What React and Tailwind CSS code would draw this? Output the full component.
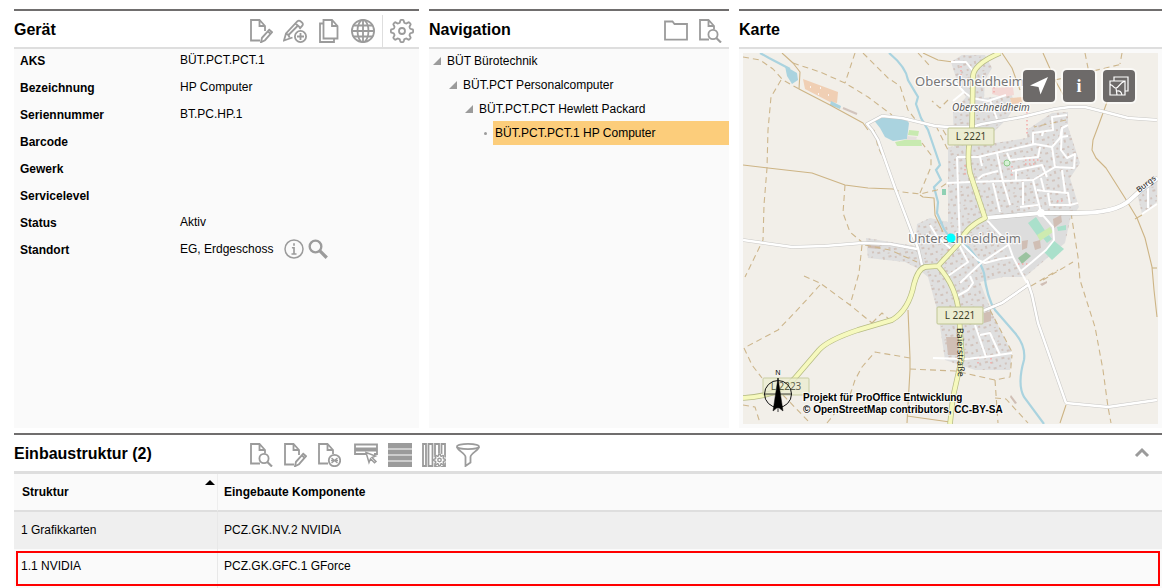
// src/App.jsx
import { ChevronUp } from 'lucide-react';

const device = [
  { label:'AKS',          value:'BÜT.PCT.PCT.1' },
  { label:'Bezeichnung',  value:'HP Computer' },
  { label:'Seriennummer', value:'BT.PC.HP.1' },
  { label:'Barcode',      value:'' },
  { label:'Gewerk',       value:'' },
  { label:'Servicelevel', value:'' },
  { label:'Status',       value:'Aktiv' },
  { label:'Standort',     value:'EG, Erdgeschoss', location:true },
];

const tree = [
  { text:'BÜT Bürotechnik',             indent:'pl-1' },
  { text:'BÜT.PCT Personalcomputer',    indent:'pl-5' },
  { text:'BÜT.PCT.PCT Hewlett Packard', indent:'pl-9' },
  { text:'BÜT.PCT.PCT.1 HP Computer',   indent:'pl-13', selected:true },
];

const components = [
  { structure:'1 Grafikkarten', part:'PCZ.GK.NV.2 NVIDIA' },
  { structure:'1.1 NVIDIA',     part:'PCZ.GK.GFC.1 GForce', marked:true },
];

/* ---------- Icons ---------- */

function gearPath(cx, cy, r, depth) {
  const pts = [];
  for (let i = 0; i < 96; i++) {
    const a = (i / 96) * Math.PI * 2;
    const wave = Math.tanh(2.2 * Math.cos(a * 8));
    const rr = r + depth * wave;
    pts.push(`${(cx + rr * Math.cos(a)).toFixed(2)} ${(cy + rr * Math.sin(a)).toFixed(2)}`);
  }
  return `M${pts.join('L')}Z`;
}

function Icon({ children, className = 'size-6' }) {
  return (
    <svg viewBox="0 0 24 24" className={`${className} block text-[#9b9b9b]`} fill="none" stroke="currentColor" strokeWidth="1.8" aria-hidden="true">
      {children}
    </svg>
  );
}

const DocEdit = () => (
  <Icon>
    <path d="M11 21.5H2V1h8.500l5.500 6v5M10.500 1v6H16"/>
    <path d="M20.200 10.800l2.800 2.400-7 8-4 2 1-4.400z"/><path d="M19 12.500l2.600 2.300"/>
  </Icon>
);
const PencilPlus = () => (
  <Icon>
    <path d="M9.500 18.500L1 21.500l2-7L14.500 2.200q1.500-1.200 3.300.3l1.300 1.200q1.400 1.400.2 3L16.500 10M3 14.500q2.500.5 3.500 4M12.500 4.500l4.500 4M5.500 16L15 6.500"/>
    <circle cx="17.500" cy="17.500" r="5.600"/><path d="M17.500 14v7M14 17.500h7"/>
  </Icon>
);
const Copies = () => (
  <Icon>
    <path d="M6.500 1H15l5.500 6v12.500h-14zM15 1v6h5.500"/><path d="M6.500 4.500H3V23h14v-3.500"/>
  </Icon>
);
const GlobeIcon = () => (
  <Icon>
    <circle cx="12" cy="12" r="11.100"/><ellipse cx="12" cy="12" rx="5.500" ry="11.100"/>
    <path d="M12 1v22M1 12h22M2.500 6.500h19M2.500 17.500h19"/>
  </Icon>
);
const Gear = () => (
  <Icon><path d={gearPath(12, 12, 9.8, 1.4)}/><circle cx="12" cy="12" r="3"/></Icon>
);
const Folder = () => (
  <Icon><path d="M1 20.700V2.500h7.500l2 2.500H23v15.700z"/></Icon>
);
const DocSearch = () => (
  <Icon>
    <path d="M11 20.500H2V1h8.500l5.500 6v3.500M10.500 1v6H16"/><circle cx="15" cy="15.500" r="4.600"/><path d="M18.300 19l4.700 4.500" strokeWidth="2.200"/>
  </Icon>
);
const DocRemove = () => (
  <Icon>
    <path d="M11 20.500H2V1h8.500l5.500 6v4M10.500 1v6H16"/><circle cx="17.500" cy="17.500" r="5.700"/>
    <path d="M14.500 15l6 5M20.500 15l-6 5M14 17.500h7" strokeWidth="1.400"/>
  </Icon>
);
const RowSelect = () => (
  <Icon>
    <path d="M1 1.500h22v4H1zM12 11H1V7.500h22V11h-3"/><path d="M12 9.500l9.500 3.500-3.500 1.500 4 4-1.500 1.300-4-4-1.500 3.700z" fill="#fff" strokeWidth="1.500"/>
  </Icon>
);
const Rows = () => (
  <Icon><path d="M0 0h24v5.500H0zM0 6.500h24v5H0zM0 12.500h24v5H0zM0 18.500h24V24H0z" fill="currentColor" stroke="none"/></Icon>
);
const Columns = () => (
  <Icon>
    <path d="M1 1h3v22H1zM6.500 1h4v22h-4zM13 1h4v22h-4zM19.500 1H23v22h-3.500z"/>
    <circle cx="17.500" cy="17" r="6.500" fill="#fff" stroke="none"/>
    <path d={gearPath(17.5, 17, 5, 0.8)} strokeWidth="1.500"/><circle cx="17.500" cy="17" r="1.700" strokeWidth="1.400"/>
  </Icon>
);
const Funnel = () => (
  <Icon>
    <ellipse cx="12" cy="3.500" rx="11" ry="2.600"/><path d="M1 4c0 3 8.500 6.500 8.500 10v9l5-3.500V14C14.500 10.500 23 7 23 4"/>
  </Icon>
);

function IconButton({ label, children }) {
  return <button type="button" title={label} aria-label={label} className="cursor-pointer">{children}</button>;
}

/* ---------- Map ---------- */

const tracks = [
  '782,53 793,63 800,72 799,89 830,105 863,123 868,130',
  '923,53 938,60 953,62', '1002,53 1012,68 1020,90', '1043,53 1055,80 1065,98', '1107,102 1099,124 1093,140 1092,150 1096,158 1106,168 1125,198 1137,218 1145,238 1152,267 1154,290 1157,317',
  '743,165 768,168 812,173 845,185 868,188 893,189', '920,195 923,197 934,198 935,215 943,232',
  '908,310 910,358 910,370 907,423', '1066,405 1060,423', '907,416 950,422', '1135,219 1142,215', '1152,268 1157,268',
];

const paths = [
  '793,63 820,72 845,83 868,97 892,115', '855,53 845,83', '743,57 760,60 773,69 783,80 799,89', '781,80 771,97 768,130 767,168 764,205 763,240 745,277',
  '863,53 888,78 900,86 908,110 918,123', '948,100 940,108 932,101', '1055,80 1085,73 1122,64', '1085,53 1089,73', '1122,53 1120,64', '893,189 902,192 920,194 937,190 947,183',
  '920,193 931,167 931,155 922,143', '874,130 878,147 888,168', '845,185 843,213 850,232 863,243', '862,245 859,273 850,305', '804,276 820,283 850,305 872,323',
  '820,285 800,307 778,330 744,348', '744,348 752,365 762,378', '872,323 882,313 890,320', '910,358 875,352 862,367 855,380 850,395', '910,369 955,371 995,380 1010,377 1012,355',
  '995,380 998,423', '995,398 1006,399 1028,423', '1071,213 1078,257 1080,280 1095,327 1103,370 1108,407 1111,423', '1043,280 1073,262', '1031,286 1058,270',
  '743,405 755,407 760,423', '783,395 810,423', '827,423 835,413', '865,245 890,250 917,262', '990,310 1012,352', '918,53 930,66', '936,126 948,150', '1066,120 1034,127', '943,130 949,140',
];

const streets = [
  '957,157 960,247 968,262 945,278', '957,157 978,157 995,153 1035,144 1052,147 1060,138 1062,128 1068,125', '1052,147 1055,167 1033,180 970,182 947,183',
  '1033,145 1033,133 1053,130 1052,117 1067,115', '997,153 1003,182 1010,205', '993,183 1000,212', '1023,182 1023,205', '1020,207 1038,205', '1033,180 1037,197 1041,212',
  '1062,128 1061,150 1067,158 1075,154 1074,168 1055,167', '1037,190 1045,191 1068,193 1070,205 1078,203', '1048,193 1050,205 1070,205', '1062,170 1065,192', '1007,153 1010,160 1038,157 1040,147',
  '978,179 983,175 998,171', '1012,171 1042,165 1047,177', '1016,171 1016,180', '1042,136 1043,132', '980,157 982,166', '1061,137 1068,136', '1041,178 1044,190',
  '951,62 966,62 974,72', '972,98 964,92 955,82', '964,92 953,101', '972,98 988,101 1006,95', '990,100 997,119', '985,218 1008,243 1013,257 1027,283', '1041,213 1053,227 1054,240 1046,250 1032,262 1021,271',
  '960,242 978,260 985,263 1000,259 1013,257', '1008,245 981,263 960,283', '1028,285 1002,303 985,310 950,322', '957,296 968,290 973,283 970,276', '933,358 965,359 985,357 1012,353', '975,325 986,357', '980,335 990,333 1000,355', '930,225 938,238 955,252',
  '1148,186 1148,208', '1142,214 1157,204',
];

const roads = [
  '1157,120 1128,118 1105,112 1085,107 1070,107 1055,109 1022,117 982,124 972,127 948,127 935,126 902,118 882,116 867,124 872,130 878,140 895,188 912,233 918,248 922,265',
  '743,240 792,247 825,246 862,243 890,244 917,249', '1027,280 1032,295 1038,323 1052,363 1066,403', '1066,403 1108,407 1157,400', '1028,285 1002,303 985,310',
];

const settlements = [
  '951,62 962,55 985,55 992,68 985,80 984,98 1012,95 1014,108 1006,120 985,140 968,152 954,148 953,112 966,97 958,84',
  '948,147 995,143 1027,138 1027,130 1052,113 1068,112 1068,127 1080,163 1070,178 1079,207 1070,220 1065,243 1025,277 1003,277 980,282 992,313 1012,353 1010,370 975,370 945,360 938,313 928,277 917,268 905,262 868,258 866,238 915,246 917,224 930,218 948,222',
  '1137,193 1157,178 1157,202 1142,214',
];

function Lines({ items, ...rest }) {
  return <g fill="none" strokeLinejoin="round" {...rest}>{items.map(p => <polyline key={p} points={p}/>)}</g>;
}

function RoadSign({ x, y, text, opacity = 1 }) {
  return (
    <g opacity={opacity}>
      <rect x={x} y={y} width="46" height="17" rx="1" fill="#ecedd2" stroke="#bfc592"/>
      <text x={x + 23} y={y + 12} textAnchor="middle" fontSize="10" fill="#3c4028">{text}</text>
    </g>
  );
}

const stateRoad = 'M1000 53Q974 64 973 76L972 127Q966 155 970 173L985 218Q966 227 960 242L938 266L925 267Q918 269 914 284Q909 310 892 320L858 330Q828 340 819 350L795 378Q780 396 743 398M938 266Q957 287 959 315L962 357L953 397L950 424';
const mainRoad = 'M985 218L1041 213H1078Q1116 213 1130 200L1141 190L1158 178';

function MapCanvas() {
  return (
    <svg viewBox="743 53 415 371" className="block w-full font-['Noto_Sans',sans-serif]" role="img" aria-label="Karte Unterschneidheim">
      <defs>
        <pattern id="houses" width="17" height="14" patternUnits="userSpaceOnUse" patternTransform="rotate(-14)">
          <path d="M1 1h3v2h-3zM7 3h2v2h-2zM12 1h2v3h-2zM3 7h2v2h-2zM8 9h3v2h-3zM14 8h2v2h-2zM1 12h2v1h-2z" fill="#d2c4bd"/>
        </pattern>
      </defs>
      <rect x="743" y="53" width="415" height="371" fill="#f2efe9"/>
      {settlements.map(p => <polygon key={p} points={p} fill="#dfdfdf"/>)}
      {settlements.map(p => <polygon key={p} points={p} fill="url(#houses)"/>)}
      <polygon points="988,220 1041,215 1070,216 1064,243 1026,275 1010,258" fill="#dddddd"/>

      {/* Fields, ponds and sports grounds */}
      <polygon points="803,79 838,92 837,103 830,102 805,89" fill="#f0cfb4"/>
      <path d="M810 87h1M820 88h1M818 94h1M828 95h1" stroke="#fff" strokeWidth="1.500"/>
      <polygon points="992,88 1013,87 1014,95 1003,97 992,94" fill="#f3d8d5"/>
      <polygon points="1010,98 1024,97 1022,103 1012,104" fill="#f0cfb4"/>
      <polygon points="785,66 797,73 798,80 792,84 787,76" fill="#aad3df"/>
      <polygon points="831,101 841,106 840,109 830,105" fill="#aad3df"/>
      <path d="M843 108l14 6" stroke="#d2c4bd" strokeWidth="2"/>
      <path d="M873 119L885 116L905 118L909 123L907 139L893 141L885 137L880 128Z" fill="#aad3df"/>
      <polygon points="909,130 919,131 918,136 908,135" fill="#c8eab0"/>
      <polygon points="895,142 909,139 921,140 922,146 897,146" fill="#c8eab0"/>
      <polygon points="907,136 917,137 916,140 907,140" fill="#e5dfdc"/>
      <rect x="942" y="189" width="4" height="6" fill="#8fd0b4"/>
      <circle cx="1007" cy="163" r="3" fill="#d5f1d4" stroke="#8dcb8c"/>
      <g fill="#aae0cb">
        <polygon points="1028,223 1036,217 1046,232 1039,238"/><polygon points="1057,227 1066,225 1066,230 1058,231"/><polygon points="1053,240 1064,249 1052,260 1044,252"/><polygon points="1043,238 1049,235 1052,239 1047,243"/>
      </g>
      <polygon points="1037,235 1050,227 1053,232 1040,241" fill="#cdebb0"/>
      <polygon points="1018,258 1026,252 1031,256 1022,264" fill="#9bc3a0"/>
      <g fill="#d0beb4">
        <polygon points="1053,219 1061,215 1062,222 1054,228"/><polygon points="1033,242 1040,240 1041,248 1035,250"/><polygon points="1022,241 1028,240 1027,248 1022,250"/><polygon points="868,245 880,246 880,249 868,248"/>
        <polygon points="984,313 991,311 991,321 984,323"/><polygon points="946,337 958,337 958,355 948,355"/><polygon points="1011,395 1017,403 1015,404 1010,397"/><polygon points="1040,284 1047,281 1047,283 1042,286"/>
      </g>
      <path d="M961 66v9M994 87v8M1027 112v22M1025 160h14M1025 164h10M1012 166v10M965 165v12M1057 201h6M948 250h6M978 358v6M991 358v6M1018 264h10" fill="none" stroke="#f4a9a6" strokeWidth="1.500" strokeDasharray="1.500 2.500"/>

      <path d="M760 53L769 58L790 69M889 53Q906 67 908 80L918 97L916 104L921 118L928 130L940 165L936 170L941 180L934 187L938 202L937 213L944 229L950 238L968 247Q981 262 984 273Q987 298 995 310L1015 333Q1026 346 1024 360Q1017 384 1024 397L1044 424" fill="none" stroke="#aad3df" strokeWidth="2.200"/>
      <Lines items={tracks} stroke="#cdb485" strokeWidth="1.100"/>
      <Lines items={paths} stroke="#cdb68c" strokeWidth="1.100" strokeDasharray="6 4"/>
      <Lines items={roads} stroke="#c9c8c6" strokeWidth="3.600"/>
      <Lines items={streets} stroke="#fff" strokeWidth="2"/>
      <Lines items={roads} stroke="#fff" strokeWidth="2.400"/>
      <path d={mainRoad} fill="none" stroke="#c4c3c1" strokeWidth="5"/>
      <path d={mainRoad} fill="none" stroke="#fff" strokeWidth="3.800"/>
      <circle cx="1041" cy="213" r="4" fill="#fff"/>
      <path d={stateRoad} fill="none" stroke="#b6bb84" strokeWidth="5.500" strokeLinejoin="round"/>
      <path d={stateRoad} fill="none" stroke="#f6f9be" strokeWidth="4" strokeLinejoin="round"/>

      <RoadSign x={948} y={128} text="L 2221"/>
      <RoadSign x={937} y={307} text="L 2221"/>
      <RoadSign x={763} y={378} text="L 2223" opacity={0.8}/>

      {/* Place and street names with a light halo */}
      <g fill="#777" stroke="#fff" strokeWidth="2.500" strokeOpacity="0.800" paintOrder="stroke" strokeLinejoin="round">
        <text x="915" y="86" fontSize="13">Oberschneidheim</text>
        <text x="908" y="243" fontSize="13">Unterschneidheim</text>
        <text x="952" y="111" fontSize="10" fontStyle="italic" fill="#555">Oberschneidheim</text>
      </g>
      <text fontSize="8" fill="#222" transform="translate(1139 193) rotate(-38)">Burgs</text>
      <text fontSize="9" fill="#222" transform="translate(957 328) rotate(89)">Baierstraße</text>
      <circle cx="951" cy="238" r="4.500" fill="#00ffff"/>

      {/* North arrow */}
      <g stroke="#111" fill="none">
        <circle cx="778" cy="394" r="13.500"/><path d="M764 394h28M778 378v34" strokeWidth="0.800"/>
        <path d="M778 378l5 33-5-4-5 4z" fill="#000" strokeWidth="0.500"/>
      </g>
      <text x="778" y="375" textAnchor="middle" fontSize="7" fill="#000">N</text>
      <g className="font-['Liberation_Sans',Arial,sans-serif]" fontSize="10" fontWeight="700" fill="#000" stroke="#fff" strokeWidth="2" strokeOpacity="0.700" paintOrder="stroke">
        <text x="803" y="401">Projekt für ProOffice Entwicklung</text>
        <text x="803" y="413">© OpenStreetMap contributors, CC-BY-SA</text>
      </g>
    </svg>
  );
}

function MapButton({ label, children }) {
  return (
    <button type="button" aria-label={label} className="flex size-8 cursor-pointer items-center justify-center rounded bg-[#6d6a69] text-white shadow-[0_0_0_2px_rgba(255,255,255,0.6)]">
      {children}
    </button>
  );
}

/* ---------- Page ---------- */

function PanelHeader({ title, children }) {
  return (
    <header className="flex h-10 items-center justify-between border-t-2 border-b-2 border-t-[#706e6e] border-b-[#dedede] bg-white">
      <h2 className="pt-0.5 text-base font-bold">{title}</h2>
      {children}
    </header>
  );
}

export default function App() {
  return (
    <main className="bg-white pt-[9px] pr-1 pl-3.5 font-['Liberation_Sans',Arial,sans-serif] text-xs text-black">
      <div className="grid grid-cols-[405fr_300fr_423fr] gap-2.5">
        {/* Device */}
        <section className="bg-[#fafafa]">
          <PanelHeader title="Gerät">
            <div className="flex gap-2.5 pt-1 pr-[5px]">
              <IconButton label="Bearbeiten"><DocEdit/></IconButton>
              <IconButton label="Erweitert bearbeiten"><PencilPlus/></IconButton>
              <IconButton label="Kopieren"><Copies/></IconButton>
              <IconButton label="Web"><GlobeIcon/></IconButton>
              <div className="-my-1 -ml-[3px] flex items-center border-l border-[#dedede] pl-[7px]">
                <IconButton label="Einstellungen"><Gear/></IconButton>
              </div>
            </div>
          </PanelHeader>
          <dl className="pl-1.5">
            {device.map(d => (
              <div key={d.label} className="flex h-[27px]">
                <dt className="w-40 leading-6 font-bold">{d.label}</dt>
                <dd className="flex items-start leading-[22px]">
                  {d.value}
                  {d.location && (
                    <span className="flex gap-1 pt-px pl-[11px]">
                      <IconButton label="Standortinfo">
                        <Icon className="size-5"><circle cx="12" cy="12" r="10.800"/><path d="M12 5v3M9.500 10.500H12V18M9 18h6" strokeWidth="2"/></Icon>
                      </IconButton>
                      <IconButton label="Standort suchen">
                        <Icon className="size-5"><circle cx="9" cy="9" r="7" strokeWidth="2.800"/><path d="M14 14l8.500 8.500" strokeWidth="4"/></Icon>
                      </IconButton>
                    </span>
                  )}
                </dd>
              </div>
            ))}
          </dl>
        </section>

        {/* Navigation */}
        <section className="bg-[#fafafa]">
          <PanelHeader title="Navigation">
            <div className="flex gap-2.5 pt-1 pr-[7px]">
              <IconButton label="Ordner"><Folder/></IconButton>
              <IconButton label="Dokument suchen"><DocSearch/></IconButton>
            </div>
          </PanelHeader>
          <ul>
            {tree.map(t => (
              <li key={t.text} className={`flex h-6 items-center ${t.indent}`}>
                <span className="w-3">
                  {t.selected
                    ? <span className="ml-[3px] block size-[3px] rounded-full bg-[#9b9b9b]"/>
                    : <svg viewBox="0 0 8 8" className="size-2"><path d="M8 0v8H0z" fill="#9b9b9b"/></svg>}
                </span>
                <a href="#" className={`flex-1 pl-0.5 leading-6 ${t.selected ? 'bg-[#fccd7b]' : ''}`}>{t.text}</a>
              </li>
            ))}
          </ul>
        </section>

        {/* Map */}
        <section className="bg-[#fafafa]">
          <PanelHeader title="Karte"/>
          <div className="relative p-1">
            <MapCanvas/>
            <div className="absolute top-[21px] right-[27px] flex gap-2">
              <MapButton label="Position">
                <svg viewBox="0 0 20 20" className="size-5"><path d="M19 1L11.500 18.500L9.500 11L1 9.500z" fill="currentColor"/></svg>
              </MapButton>
              <MapButton label="Info"><span className="font-['Liberation_Serif',serif] text-lg font-bold">i</span></MapButton>
              <MapButton label="Ebenen">
                <svg viewBox="0 0 20 20" className="size-5" fill="none" stroke="currentColor" strokeWidth="1.200"><path d="M5 5V1h14v14h-3M1 5h15v14H1zM1 9c3-1 3 3 6 3s3-5 9-7M7 12l1 7M8 15q4-1 5 4"/></svg>
              </MapButton>
            </div>
          </div>
        </section>
      </div>

      {/* Installed components */}
      <section className="mt-[5px] bg-[#fafafa]">
        <header className="flex h-[41px] items-center border-t-2 border-b-[3px] border-t-[#706e6e] border-b-[#dedede] bg-white">
          <h2 className="w-[235px] pt-0.5 text-base font-bold">Einbaustruktur (2)</h2>
          <div className="flex gap-[13px] pt-1">
            <div className="flex gap-2.5">
              <IconButton label="Dokument suchen"><DocSearch/></IconButton>
              <IconButton label="Bearbeiten"><DocEdit/></IconButton>
              <IconButton label="Entfernen"><DocRemove/></IconButton>
            </div>
            <div className="flex gap-2.5">
              <IconButton label="Zeile auswählen"><RowSelect/></IconButton>
              <IconButton label="Zeilen"><Rows/></IconButton>
              <IconButton label="Spalten konfigurieren"><Columns/></IconButton>
              <IconButton label="Filtern"><Funnel/></IconButton>
            </div>
          </div>
          <button type="button" aria-label="Einklappen" className="mr-2 ml-auto cursor-pointer text-[#9b9b9b]"><ChevronUp size={24} strokeWidth={3} strokeLinecap="butt" strokeLinejoin="miter"/></button>
        </header>
        <table className="w-full border-separate border-spacing-0 text-left">
          <thead>
            <tr className="h-[38px]">
              <th className="w-[204px] border-r border-b-2 border-r-[#eee] border-b-[#dedede] px-0.5 pl-2">
                <div className="flex items-center justify-between">
                  Struktur
                  <svg viewBox="0 0 10 5" className="mb-4 -mt-1 h-[5px] w-2.5"><path d="M0 5l5-5 5 5z"/></svg>
                </div>
              </th>
              <th className="border-b-2 border-[#dedede] pl-1.5">Eingebaute Komponente</th>
            </tr>
          </thead>
          <tbody>
            {components.map(c => (
              <tr key={c.part} className={c.marked ? 'h-[39px] outline-2 -outline-offset-4 outline-[#ff0000]' : 'h-[37px] bg-[#efefef]'}>
                <td className={`border-r border-[#e8e8e8] pl-[7px] ${c.marked ? 'pb-1.5' : 'pb-0.5'}`}>{c.structure}</td>
                <td className={`pl-1.5 ${c.marked ? 'pb-1.5' : 'pb-0.5'}`}>{c.part}</td>
              </tr>
            ))}
          </tbody>
        </table>
      </section>
    </main>
  );
}
